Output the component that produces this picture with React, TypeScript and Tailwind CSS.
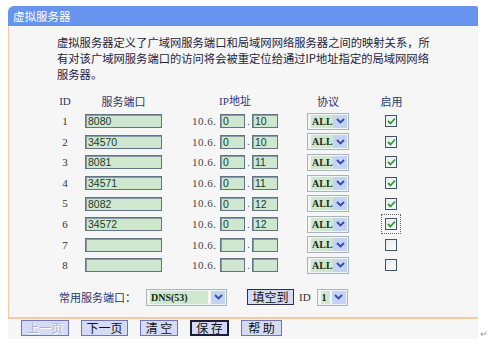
import React from 'react';

type Row = { id: number; port: string; a: string; b: string; on: boolean; focus?: boolean };

const rows: Row[] = [
  { id: 1, port: '8080', a: '0', b: '10', on: true },
  { id: 2, port: '34570', a: '0', b: '10', on: true },
  { id: 3, port: '8081', a: '0', b: '11', on: true },
  { id: 4, port: '34571', a: '0', b: '11', on: true },
  { id: 5, port: '8082', a: '0', b: '12', on: true },
  { id: 6, port: '34572', a: '0', b: '12', on: true, focus: true },
  { id: 7, port: '', a: '', b: '', on: false },
  { id: 8, port: '', a: '', b: '', on: false },
];

const Chevron = () => (
  <svg width="9" height="6" viewBox="0 0 9 6">
    <path d="M1 1 L4.5 4.5 L8 1" fill="none" stroke="#3848b0" strokeWidth="1.8" />
  </svg>
);

const TextBox = ({ value, w }: { value: string; w: string }) => (
  <div
    className={`${w} h-[14px] bg-[#cfe7cf] border border-[#5d7585] shadow-[inset_1px_1px_0_#8a9aa6] pl-[2px] text-[10.5px] leading-[12px] text-[#1c3a2c] font-['Liberation_Sans']`}
  >
    {value}
  </div>
);

const Select = ({ label, w, textW }: { label: string; w: string; textW: string }) => (
  <div className={`${w} h-[17px] flex items-stretch border border-[#a9b3bd] bg-[#f4f6f4] p-[1px]`}>
    <div className="flex-1 flex items-center pl-[2px]">
      <span
        className={`${textW} bg-[#cfe7cf] font-['Liberation_Serif'] font-bold text-[10px] leading-[13px] text-[#1a2a1a] pl-[1px]`}
      >
        {label}
      </span>
    </div>
    <div className="w-[14px] bg-[#c3d3f3] flex items-center justify-center">
      <Chevron />
    </div>
  </div>
);

const CheckBox = ({ on, focus }: { on: boolean; focus?: boolean }) => (
  <div className={focus ? 'outline-1 outline-dotted outline-[#666] outline-offset-[3px]' : ''}>
    <div className="w-[12px] h-[12px] border border-[#3d5566] bg-gradient-to-br from-[#e8ecee] to-[#fbfbfb] flex items-center justify-center">
      {on && (
        <svg width="9" height="8" viewBox="0 0 9 8">
          <path d="M1 4 L3.5 6.5 L8 1.5" fill="none" stroke="#2f9a35" strokeWidth="1.8" />
        </svg>
      )}
    </div>
  </div>
);

const Btn = ({
  children,
  w,
  disabled,
  strong,
}: {
  children: React.ReactNode;
  w: string;
  disabled?: boolean;
  strong?: boolean;
}) => (
  <div
    className={`${w} h-[16px] flex items-center justify-center bg-[#d6dbf5] text-[12px] leading-none ${
      strong ? 'border-2 border-[#1c1c3a]' : 'border border-[#6e76bb]'
    } ${disabled ? 'text-[#aab1d6] [text-shadow:1px_1px_0_#ffffff]' : 'text-[#111]'}`}
  >
    {children}
  </div>
);

export default function App() {
  return (
    <div className="w-[500px] h-[361px] bg-white font-['Noto_Sans_CJK_SC',sans-serif] text-[#1c2440]">
      <div className="flex items-end pt-[6px]">
        <div className="ml-[8px] w-[470px]">
          <div className="h-[20px] bg-[#6694ee] rounded-tl-[6px] rounded-tr-[2px] pl-[5px] text-white text-[11.5px] leading-[20px]">
            虚拟服务器
          </div>

          <div className="bg-[#f6f6f6] border-l border-b-2 border-[#f4cba0] pb-[10px]">
            <div className="pl-[48px] pt-[8px] text-[11.3px] leading-[16px] whitespace-nowrap">
              <div>虚拟服务器定义了广域网服务端口和局域网网络服务器之间的映射关系，所</div>
              <div>有对该广域网服务端口的访问将会被重定位给通过IP地址指定的局域网网络</div>
              <div>服务器。</div>
            </div>

            <div className="pl-[46px] mt-[9px] text-[11px] text-[#2a3572]">
              <div className="flex items-center h-[20px]">
                <div className="w-[20px] text-center font-['Liberation_Serif'] text-[11px]">ID</div>
                <div className="ml-[10px] w-[77px] text-center">服务端口</div>
                <div className="ml-[30px] w-[86px] text-center">
                  <span className="font-['Liberation_Serif']">IP</span>地址
                </div>
                <div className="ml-[29px] w-[42px] text-center">协议</div>
                <div className="ml-[30px] w-[25px] text-center">启用</div>
              </div>

              {rows.map((r) => (
                <div key={r.id} className="flex items-center h-[20.6px]">
                  <div className="w-[20px] text-center font-['Liberation_Serif'] text-[11px] text-[#333]">
                    {r.id}
                  </div>
                  <div className="ml-[10px]">
                    <TextBox value={r.port} w="w-[77px]" />
                  </div>
                  <div className="ml-[30px] w-[86px] flex items-center">
                    <span className="w-[28px] font-['Liberation_Serif'] text-[11px] text-[#444] tracking-[0.5px]">
                      10.6.
                    </span>
                    <TextBox value={r.a} w="w-[25px]" />
                    <span className="w-[7px] text-center text-[9px] leading-none text-[#555]">.</span>
                    <TextBox value={r.b} w="w-[26px]" />
                  </div>
                  <div className="ml-[29px]">
                    <Select label="ALL" w="w-[42px]" textW="w-[22px]" />
                  </div>
                  <div className="ml-[36px]">
                    <CheckBox on={r.on} focus={r.focus} />
                  </div>
                </div>
              ))}

              <div className="flex items-center h-[20px] mt-[11.5px]">
                <div className="ml-[4px] w-[87px] text-[11px] text-[#2a3572] whitespace-nowrap">常用服务端口：</div>
                <Select label="DNS(53)" w="w-[81px]" textW="w-[58px]" />
                <div className="ml-[20px] w-[47px] h-[16px] flex items-center justify-center bg-[#d6dbf5] border border-[#2a2f55] text-[12px] text-[#111]">
                  填空到
                </div>
                <span className="ml-[5px] font-['Liberation_Serif'] text-[11px] text-[#333]">ID</span>
                <div className="ml-[6px]">
                  <Select label="1" w="w-[31px]" textW="w-[9px]" />
                </div>
              </div>
            </div>
          </div>

          <div className="bg-[#f6f6f6] pt-[1px] pb-[3px] pl-[13px] flex gap-[12px]">
            <Btn w="w-[48px]" disabled>
              上一页
            </Btn>
            <Btn w="w-[47px]">下一页</Btn>
            <Btn w="w-[38px]">清 空</Btn>
            <Btn w="w-[39px]" strong>
              保 存
            </Btn>
            <Btn w="w-[41px]">帮 助</Btn>
          </div>
        </div>
        <span className="ml-[2px] mb-[1px] text-[9px] text-[#999] leading-none">↵</span>
      </div>
    </div>
  );
}
